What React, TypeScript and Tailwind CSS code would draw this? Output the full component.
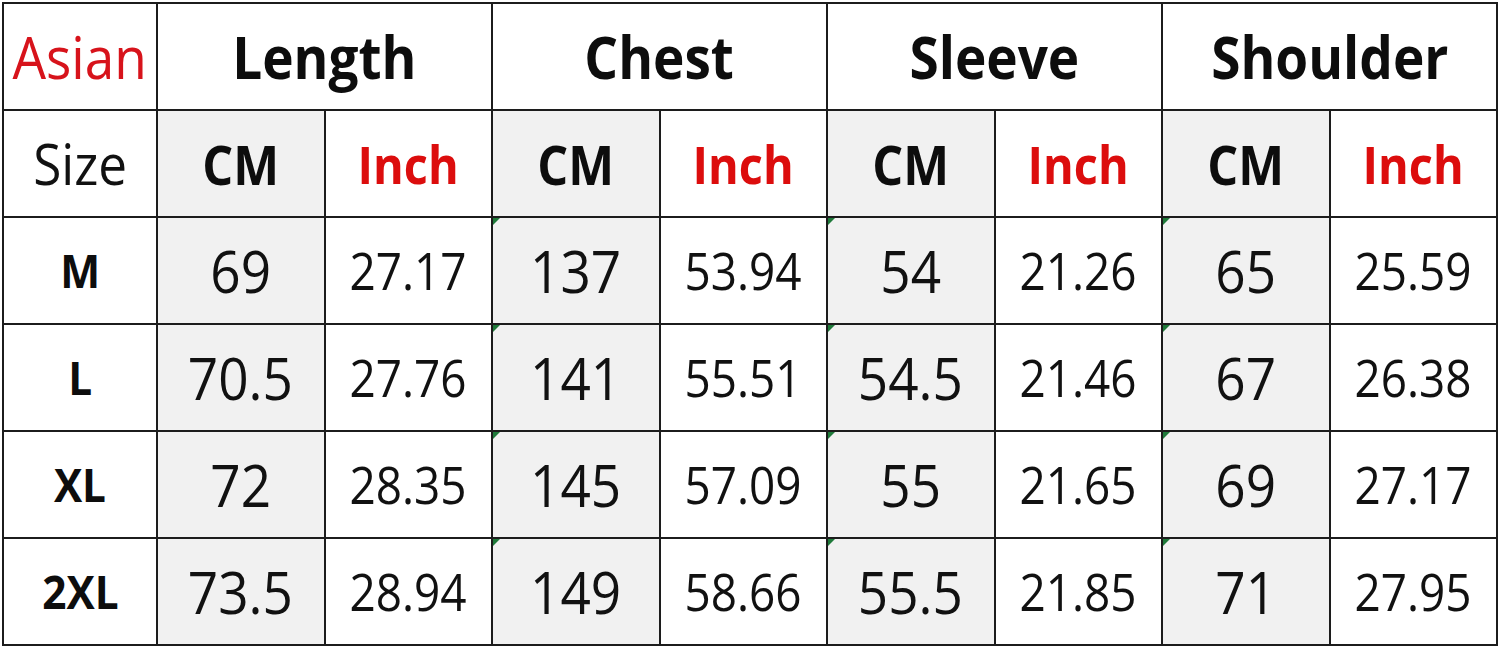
import React from "react";

type Row = {
  size: string;
  values: [string, string][];
};

const groups = ["Length", "Chest", "Sleeve", "Shoulder"];

const rows: Row[] = [
  { size: "M", values: [["69", "27.17"], ["137", "53.94"], ["54", "21.26"], ["65", "25.59"]] },
  { size: "L", values: [["70.5", "27.76"], ["141", "55.51"], ["54.5", "21.46"], ["67", "26.38"]] },
  { size: "XL", values: [["72", "28.35"], ["145", "57.09"], ["55", "21.65"], ["69", "27.17"]] },
  { size: "2XL", values: [["73.5", "28.94"], ["149", "58.66"], ["55.5", "21.85"], ["71", "27.95"]] },
];

const font = { fontFamily: '"Open Sans", "Noto Sans", sans-serif' };

const Cell = ({
  children,
  className = "",
  marker = false,
}: {
  children: React.ReactNode;
  className?: string;
  marker?: boolean;
}) => (
  <div className={`relative flex items-center justify-center ${className}`}>
    {marker && (
      <span className="absolute top-0 left-0 w-0 h-0 border-t-[7px] border-r-[7px] border-t-[#1f7a3a] border-r-transparent" />
    )}
    <span className="inline-block scale-x-[0.9] leading-none">{children}</span>
  </div>
);

export default function App() {
  return (
    <div className="w-[1500px] h-[650px] bg-white" style={font}>
      <div className="ml-[2px] mt-[2px] w-[1496px] h-[644px] bg-[#1c1c1c] p-[2px] grid grid-cols-[152px_repeat(8,1fr)] grid-rows-[repeat(6,1fr)] gap-[2px]">
        {/* header row */}
        <Cell className="bg-white text-[59px] text-[#d7131b]">Asian</Cell>
        {groups.map((g) => (
          <Cell key={g} className="col-span-2 bg-white text-[59px] font-bold text-[#0d0d0d]">
            {g}
          </Cell>
        ))}

        {/* unit row */}
        <Cell className="bg-white text-[57px] text-[#111]">Size</Cell>
        {groups.map((g) => (
          <React.Fragment key={g}>
            <Cell className="bg-[#f1f1f1] text-[54px] font-bold text-[#0d0d0d]">CM</Cell>
            <Cell className="bg-white text-[52px] font-bold text-[#dc0d0d]">Inch</Cell>
          </React.Fragment>
        ))}

        {/* data rows */}
        {rows.map((r) => (
          <React.Fragment key={r.size}>
            <Cell className="bg-white text-[47px] font-bold text-[#0d0d0d]">{r.size}</Cell>
            {r.values.map(([cm, inch], i) => (
              <React.Fragment key={i}>
                <Cell marker={i > 0} className="bg-[#f1f1f1] text-[59px] text-[#111]">
                  {cm}
                </Cell>
                <Cell className="bg-white text-[51px] text-[#111]">{inch}</Cell>
              </React.Fragment>
            ))}
          </React.Fragment>
        ))}
      </div>
    </div>
  );
}
